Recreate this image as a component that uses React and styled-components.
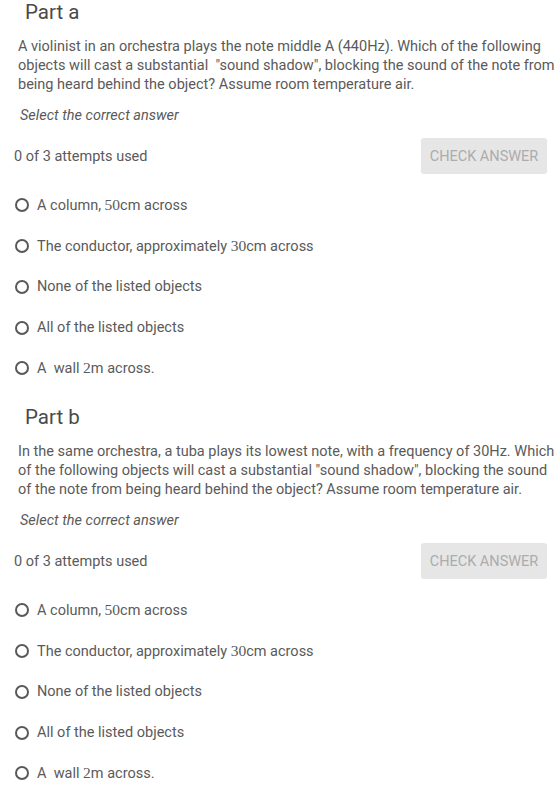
import React from 'react';
import styled, { createGlobalStyle } from 'styled-components';

const GlobalStyle = createGlobalStyle`
  body {
    margin: 0;
    background: #ffffff;
    font-family: Roboto, "Liberation Sans", sans-serif;
    color: #5a5a5a;
  }
`

const parts = [
  {
    title: 'Part a',
    question: 'A violinist in an orchestra plays the note middle A (440Hz). Which of the following objects will cast a substantial \u00a0"sound shadow", blocking the sound of the note from being heard behind the object? Assume room temperature air.',
  },
  {
    title: 'Part b',
    question: 'In the same orchestra, a tuba plays its lowest note, with a frequency of 30Hz. Which of the following objects will cast a substantial "sound shadow", blocking the sound of the note from being heard behind the object? Assume room temperature air.',
  },
]

const options = [
  ['A column, ', '50', 'cm across'],
  ['The conductor, approximately ', '30', 'cm across'],
  ['None of the listed objects'],
  ['All of the listed objects'],
  ['A \u00a0wall ', '2', 'm across.'],
]

const App = () => {
  return (
    <Page>
      <GlobalStyle />
      {parts.map(part => (
        <Part key={part.title}>
          <Heading>{part.title}</Heading>
          <Question>{part.question}</Question>
          <Hint>Select the correct answer</Hint>
          <AttemptsRow>
            <Attempts>0 of 3 attempts used</Attempts>
            <CheckButton disabled>CHECK ANSWER</CheckButton>
          </AttemptsRow>
          <OptionList>
            {options.map((opt, i) => (
              <Option key={i}>
                <Radio />
                <OptionText>
                  {opt[0]}
                  {opt[1] && <Num>{opt[1]}</Num>}
                  {opt[2]}
                </OptionText>
              </Option>
            ))}
          </OptionList>
        </Part>
      ))}
    </Page>
  )
}

const Page = styled.main`
  width: 560px;
`

const Part = styled.section`
  height: 405px;
  padding: 0 2px 0 18px;
  box-sizing: border-box;
  display: flex;
  flex-direction: column;
`

const Heading = styled.h2`
  margin: 0 0 0 7px;
  font-size: 20.5px;
  line-height: 24px;
  font-weight: 400;
  color: #4a4a4a;
`

const Question = styled.p`
  margin: 13px 0 0 0;
  font-size: 14.5px;
  line-height: 19px;
`

const Hint = styled.p`
  margin: 12px 0 0 2px;
  font-size: 14.5px;
  line-height: 19px;
  font-style: italic;
`

const AttemptsRow = styled.div`
  margin: 13px 0 0 -4px;
  display: flex;
  justify-content: space-between;
  align-items: center;
  height: 36px;
  padding-right: 11px;
`

const Attempts = styled.span`
  font-size: 14.5px;
`

const CheckButton = styled.button`
  width: 126px;
  height: 36px;
  border: none;
  border-radius: 3px;
  background: #e6e6e6;
  color: #acacac;
  font-family: Roboto, "Liberation Sans", sans-serif;
  font-size: 14.5px;
  padding: 0;
`

const OptionList = styled.ul`
  list-style: none;
  margin: 11px 0 0 -4px;
  padding: 0;
`

const Option = styled.li`
  height: 40.75px;
  display: flex;
  align-items: center;
`

const Radio = styled.span`
  width: 10px;
  height: 10px;
  border: 2px solid #595959;
  border-radius: 50%;
  margin-left: 1px;
  margin-right: 8px;
`

const OptionText = styled.span`
  font-size: 14.5px;
`

const Num = styled.span`
  font-family: "Liberation Serif", serif;
  font-size: 15.5px;
`

export default App;
